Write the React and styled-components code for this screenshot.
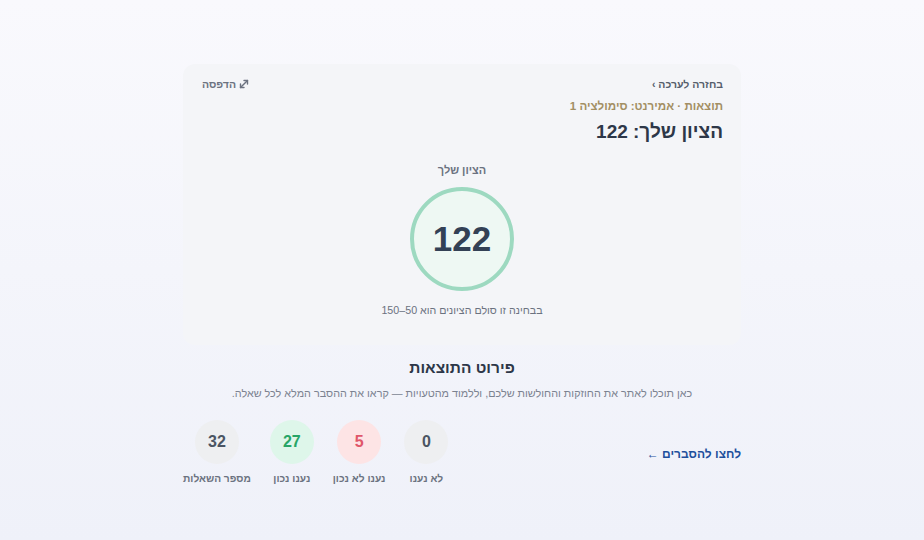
import React from "react";
import styled, { createGlobalStyle } from "styled-components";

const Global = createGlobalStyle`
  html, body { margin: 0; padding: 0; }
  body {
    font-family: "Liberation Sans", Arial, "Noto Sans", sans-serif;
    background: linear-gradient(180deg, #f9f9fd 0%, #eff1f9 100%);
    min-height: 540px;
  }
  #root { min-height: 540px; }
`;

const Page = styled.div`
  direction: rtl;
  width: 558px;
  margin: 0 auto;
  padding-top: 64px;
`;

const Card = styled.section`
  background: #f4f5f8;
  border-radius: 12px;
  padding: 13px 18px 28px;
  display: flex;
  flex-direction: column;
`;

const TopBar = styled.div`
  display: flex;
  justify-content: space-between;
  align-items: center;
  font-size: 10.5px;
  font-weight: 700;
  line-height: 14px;
`;

const BackLink = styled.a`
  color: #555d6b;
  text-decoration: none;
`;

const PrintBtn = styled.span`
  color: #6b7280;
  display: inline-flex;
  align-items: center;
  gap: 3px;
  margin-left: 1px;
`;

const Kicker = styled.div`
  margin-top: 7px;
  font-size: 11.6px;
  font-weight: 700;
  color: #a38f63;
  line-height: 16px;
`;

const Title = styled.h1`
  margin: 6px 0 0;
  font-size: 19px;
  font-weight: 700;
  color: #2d3748;
  line-height: 24px;
`;

const ScoreBlock = styled.div`
  display: flex;
  flex-direction: column;
  align-items: center;
  margin-top: 18px;
`;

const ScoreLabel = styled.div`
  font-size: 11px;
  font-weight: 700;
  color: #6b7280;
  line-height: 16px;
`;

const ScoreRing = styled.div`
  margin-top: 9px;
  width: 96px;
  height: 96px;
  border-radius: 50%;
  border: 4px solid #9dd9c0;
  background: #eef8f3;
  display: flex;
  align-items: center;
  justify-content: center;
  font-size: 35px;
  font-weight: 700;
  color: #334155;
`;

const ScaleNote = styled.div`
  margin-top: 12px;
  font-size: 10.7px;
  color: #6b7280;
  line-height: 14px;
`;

const Breakdown = styled.section`
  margin-top: 13px;
  display: flex;
  flex-direction: column;
  align-items: center;
`;

const SectionTitle = styled.h2`
  margin: 0;
  font-size: 15.5px;
  font-weight: 700;
  color: #2d3748;
  line-height: 20px;
`;

const SectionText = styled.p`
  margin: 8px 0 0;
  font-size: 10.8px;
  color: #7b8290;
  line-height: 14px;
`;

const StatsRow = styled.div`
  align-self: stretch;
  margin-top: 20px;
  display: flex;
  justify-content: space-between;
  align-items: flex-start;
`;

const ExplainLink = styled.a`
  margin-top: 26px;
  font-size: 12px;
  font-weight: 700;
  color: #1e4f9c;
  text-decoration: none;
  line-height: 16px;
`;

const Stats = styled.div`
  display: flex;
  gap: 19px;
`;

const Stat = styled.div`
  display: flex;
  flex-direction: column;
  align-items: center;
  min-width: 44px;
`;

const tones = {
  gray: { bg: "#eeeff1", fg: "#4b5563" },
  red: { bg: "#fde4e5", fg: "#e0566a" },
  green: { bg: "#def6ea", fg: "#27a567" },
};

const Bubble = styled.div`
  width: 44px;
  height: 44px;
  border-radius: 50%;
  background: ${(p) => tones[p.$tone].bg};
  color: ${(p) => tones[p.$tone].fg};
  display: flex;
  align-items: center;
  justify-content: center;
  font-size: 16px;
  font-weight: 700;
`;

const StatLabel = styled.div`
  margin-top: 8px;
  font-size: 10.2px;
  font-weight: 700;
  color: #6b7280;
  line-height: 14px;
  white-space: nowrap;
`;

const DiagIcon = () => (
  <svg width="10" height="10" viewBox="0 0 10 10" fill="none" stroke="#6b7280" strokeWidth="1.4" strokeLinecap="round" strokeLinejoin="round">
    <path d="M1.5 8.5 L8.5 1.5" />
    <path d="M5 1.5 H8.5 V5" />
    <path d="M1.5 5 V8.5 H5" />
  </svg>
);

const stats = [
  { value: 0, label: "לא נענו", tone: "gray" },
  { value: 5, label: "נענו לא נכון", tone: "red" },
  { value: 27, label: "נענו נכון", tone: "green" },
  { value: 32, label: "מספר השאלות", tone: "gray" },
];

export default function App() {
  return (
    <>
      <Global />
      <Page>
        <Card>
          <TopBar>
            <BackLink href="#">בחזרה לערכה ›</BackLink>
            <PrintBtn>
              <DiagIcon />
              הדפסה
            </PrintBtn>
          </TopBar>
          <Kicker>תוצאות · אמירנט: סימולציה 1</Kicker>
          <Title>הציון שלך: 122</Title>
          <ScoreBlock>
            <ScoreLabel>הציון שלך</ScoreLabel>
            <ScoreRing>122</ScoreRing>
            <ScaleNote>בבחינה זו סולם הציונים הוא 50–150</ScaleNote>
          </ScoreBlock>
        </Card>
        <Breakdown>
          <SectionTitle>פירוט התוצאות</SectionTitle>
          <SectionText>
            כאן תוכלו לאתר את החוזקות והחולשות שלכם, וללמוד מהטעויות — קראו את ההסבר המלא לכל שאלה.
          </SectionText>
          <StatsRow>
            <ExplainLink href="#">לחצו להסברים ←</ExplainLink>
            <Stats>
              {stats.map((s) => (
                <Stat key={s.label}>
                  <Bubble $tone={s.tone}>{s.value}</Bubble>
                  <StatLabel>{s.label}</StatLabel>
                </Stat>
              ))}
            </Stats>
          </StatsRow>
        </Breakdown>
      </Page>
    </>
  );
}
